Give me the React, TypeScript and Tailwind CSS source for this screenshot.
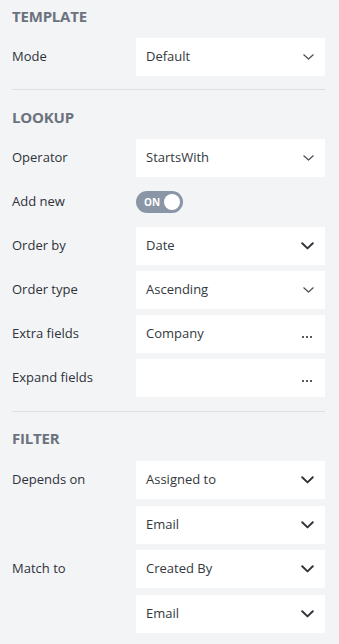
import React from "react";

type ControlKind = "select" | "selectLg" | "dots";

function ChevronSmall() {
    return (
        <svg width="11" height="6" viewBox="0 0 11 6" fill="none">
            <path d="M0.8 0.8 L5.5 5 L10.2 0.8" stroke="#4b4f56" strokeWidth="1.2" strokeLinecap="round" strokeLinejoin="round" />
        </svg>
    );
}

function ChevronLarge() {
    return (
        <svg width="13" height="8" viewBox="0 0 13 8" fill="none">
            <path d="M1.2 1.2 L6.5 6.4 L11.8 1.2" stroke="#2f3238" strokeWidth="1.9" strokeLinecap="round" strokeLinejoin="round" />
        </svg>
    );
}

function Control({ value, kind }: { value: string; kind: ControlKind }) {
    return (
        <div className="h-[38px] w-[189px] bg-white flex items-center justify-between pl-[10px] pr-[11px]">
            <span className="text-[13px] text-[#333840]">{value}</span>
            {kind === "select" && <ChevronSmall />}
            {kind === "selectLg" && <ChevronLarge />}
            {kind === "dots" && (
                <span className="flex gap-[2px] pt-[6px] pr-[2px]">
                    <span className="w-[2px] h-[2px] bg-[#555a61]" />
                    <span className="w-[2px] h-[2px] bg-[#555a61]" />
                    <span className="w-[2px] h-[2px] bg-[#555a61]" />
                </span>
            )}
        </div>
    );
}

function Row({ label, children }: { label: string; children: React.ReactNode }) {
    return (
        <div className="flex">
            <div className="w-[124px] h-[38px] flex items-center text-[13px] text-[#2e323a]">{label}</div>
            <div className="flex flex-col gap-[6.5px]">{children}</div>
        </div>
    );
}

function Heading({ title }: { title: string }) {
    return <h2 className="text-[15px] leading-[20px] font-bold text-[#6b727d] tracking-[-0.2px]">{title}</h2>;
}

export default function App() {
    return (
        <div className="min-h-[644px] w-[339px] bg-[#f3f4f6] pl-3 pr-[14px] pt-[6px]" style={{ fontFamily: '"Open Sans", "Noto Sans", sans-serif' }}>
            {/* Template */}
            <Heading title="TEMPLATE" />
            <div className="mt-[12px]">
                <Row label="Mode">
                    <Control value="Default" kind="select" />
                </Row>
            </div>
            <div className="border-t border-[#dcdfe3] mt-[13px]" />

            {/* Lookup */}
            <div className="pt-[17px]">
                <Heading title="LOOKUP" />
            </div>
            <div className="mt-[12px] flex flex-col gap-[6px]">
                <Row label="Operator">
                    <Control value="StartsWith" kind="select" />
                </Row>
                <Row label="Add new">
                    <div className="h-[38px] flex items-center">
                        <div className="w-[47px] h-[22px] rounded-full bg-[#8a96a6] flex items-center justify-between pl-[8px] pr-[3px]">
                            <span className="text-[10px] font-bold text-white">ON</span>
                            <span className="w-[16px] h-[16px] rounded-full bg-white" />
                        </div>
                    </div>
                </Row>
                <Row label="Order by">
                    <Control value="Date" kind="selectLg" />
                </Row>
                <Row label="Order type">
                    <Control value="Ascending" kind="select" />
                </Row>
                <Row label="Extra fields">
                    <Control value="Company" kind="dots" />
                </Row>
                <Row label="Expand fields">
                    <Control value="" kind="dots" />
                </Row>
            </div>
            <div className="border-t border-[#dcdfe3] mt-[14px]" />

            {/* Filter */}
            <div className="pt-[16px]">
                <Heading title="FILTER" />
            </div>
            <div className="mt-[13px] flex flex-col gap-[6.5px]">
                <Row label="Depends on">
                    <Control value="Assigned to" kind="selectLg" />
                    <Control value="Email" kind="selectLg" />
                </Row>
                <Row label="Match to">
                    <Control value="Created By" kind="selectLg" />
                    <Control value="Email" kind="selectLg" />
                </Row>
            </div>
        </div>
    );
}
